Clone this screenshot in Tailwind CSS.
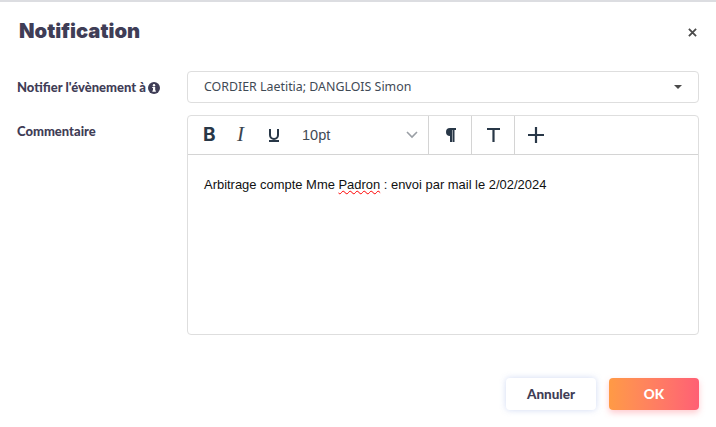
<!DOCTYPE html>
<html lang="fr">
<head>
    <meta charset="UTF-8">
    <title>Notification</title>
    <script src="https://cdn.jsdelivr.net/npm/@tailwindcss/browser@4"></script>
</head>
<body class="bg-white font-['Noto_Sans',sans-serif] overflow-hidden">
    <div class="w-[716px] h-[427px] border-t-2 border-[#dcdde1] flex flex-col">
        <!-- header -->
        <div class="h-[56px] pl-[19px] pr-[19px] flex items-center justify-between">
            <h2 class="font-['Inter',sans-serif] text-[20.2px] font-black text-[#3f3d56] pt-[2px]">Notification</h2>
            <svg class="mt-[4px]" width="9" height="9" viewBox="0 0 10 10"><path d="M1 1l8 8M9 1l-8 8" stroke="#4a4a4a" stroke-width="2"/></svg>
        </div>

        <div class="pl-[17px] pr-[17px] pt-[13px] flex flex-col gap-[12px]">
            <!-- destinataires -->
            <div class="flex items-center">
                <label class="w-[170px] flex items-center gap-[2px] font-['Lato',sans-serif] text-[13px] font-black text-[#3f3d56] pt-[1px]">
                    Notifier l'évènement à
                    <svg width="12" height="12" viewBox="0 0 12 12"><circle cx="6" cy="6" r="6" fill="#3f3d56"/><rect x="5" y="5" width="2.2" height="4.4" fill="#fff"/><rect x="4.2" y="8.6" width="3.8" height="1" fill="#fff"/><rect x="4.2" y="5" width="2" height="1" fill="#fff"/><circle cx="6" cy="3.2" r="1.2" fill="#fff"/></svg>
                </label>
                <div class="w-[512px] h-[32px] border border-[#dedede] rounded-[4px] pl-[16px] pr-[16px] flex items-center justify-between text-[12.4px] text-[#3f4a55]">
                    <span class="pt-[1px]">CORDIER Laetitia; DANGLOIS Simon</span>
                    <span class="w-0 h-0 border-x-[4px] border-x-transparent border-t-[4px] border-t-[#4a4a4a]"></span>
                </div>
            </div>

            <!-- commentaire -->
            <div class="flex items-start">
                <label class="w-[170px] pt-[7px] font-['Lato',sans-serif] text-[13px] font-black text-[#3f3d56]">Commentaire</label>
                <div class="w-[512px] h-[220px] border border-[#dedede] rounded-[4px] flex flex-col">
                    <div class="h-[39px] border-b border-[#d4d4d4] flex items-stretch text-[#283747]">
                        <div class="w-[241px] pl-[15px] pr-[10px] flex items-center border-r border-[#d4d4d4]">
                            <span class="w-[13px] font-['Inter',sans-serif] text-[19px] font-bold">B</span>
                            <span class="ml-[21px] w-[10px] font-['Liberation_Serif',serif] text-[21px] italic text-[#3a4450]">I</span>
                            <svg class="ml-[21px]" width="12" height="14" viewBox="0 0 12 14"><path d="M2 1v6a4 4 0 0 0 8 0V1M1 13h10" fill="none" stroke="#283747" stroke-width="2"/></svg>
                            <span class="ml-[22px] pt-[2px] font-['Liberation_Sans',sans-serif] text-[14.5px] text-[#3f4a55]">10pt</span>
                            <svg class="ml-auto" width="12" height="8" viewBox="0 0 12 8"><path d="M1 1l5 5 5-5" fill="none" stroke="#9a9fa5" stroke-width="1.6"/></svg>
                        </div>
                        <div class="w-[43px] flex items-center justify-center border-r border-[#d4d4d4]">
                            <svg width="11" height="14" viewBox="0 0 11 14"><path d="M5 0h6v2H9.500v12H7.500V2H7v12H5V8A4 4 0 0 1 5 0z" fill="#283747"/></svg>
                        </div>
                        <div class="w-[43px] flex items-center justify-center border-r border-[#d4d4d4]">
                            <svg width="13" height="14" viewBox="0 0 13 14"><path d="M0 1h13M6.500 1v13" fill="none" stroke="#283747" stroke-width="2.200"/></svg>
                        </div>
                        <div class="w-[41px] flex items-center justify-center">
                            <svg width="16" height="16" viewBox="0 0 16 16"><path d="M0 8h16M8 0v16" fill="none" stroke="#283747" stroke-width="2.200"/></svg>
                        </div>
                    </div>
                    <div class="px-[16px] pt-[21px] font-['Liberation_Sans',sans-serif] text-[12.95px] leading-[18px] text-[#111]">
                        Arbitrage compte Mme <span class="underline decoration-wavy decoration-[#ff0000] decoration-1">Padron</span> : envoi par mail le 2/02/2024
                    </div>
                </div>
            </div>
        </div>

        <!-- actions -->
        <div class="mt-[43px] pr-[17px] flex justify-end gap-[13px]">
            <button class="w-[90px] h-[32px] rounded-[4px] bg-white shadow-[0_0_6px_rgba(120,150,220,0.35)] font-['Lato',sans-serif] text-[13.5px] font-black text-[#3f3d56]">Annuler</button>
            <button class="w-[90px] h-[32px] rounded-[4px] bg-linear-to-r from-[#ff9a45] to-[#ff5f74] shadow-[0_3px_6px_rgba(255,110,120,0.35)] font-['Lato',sans-serif] text-[13.5px] font-black text-white">OK</button>
        </div>
    </div>
</body>
</html>
